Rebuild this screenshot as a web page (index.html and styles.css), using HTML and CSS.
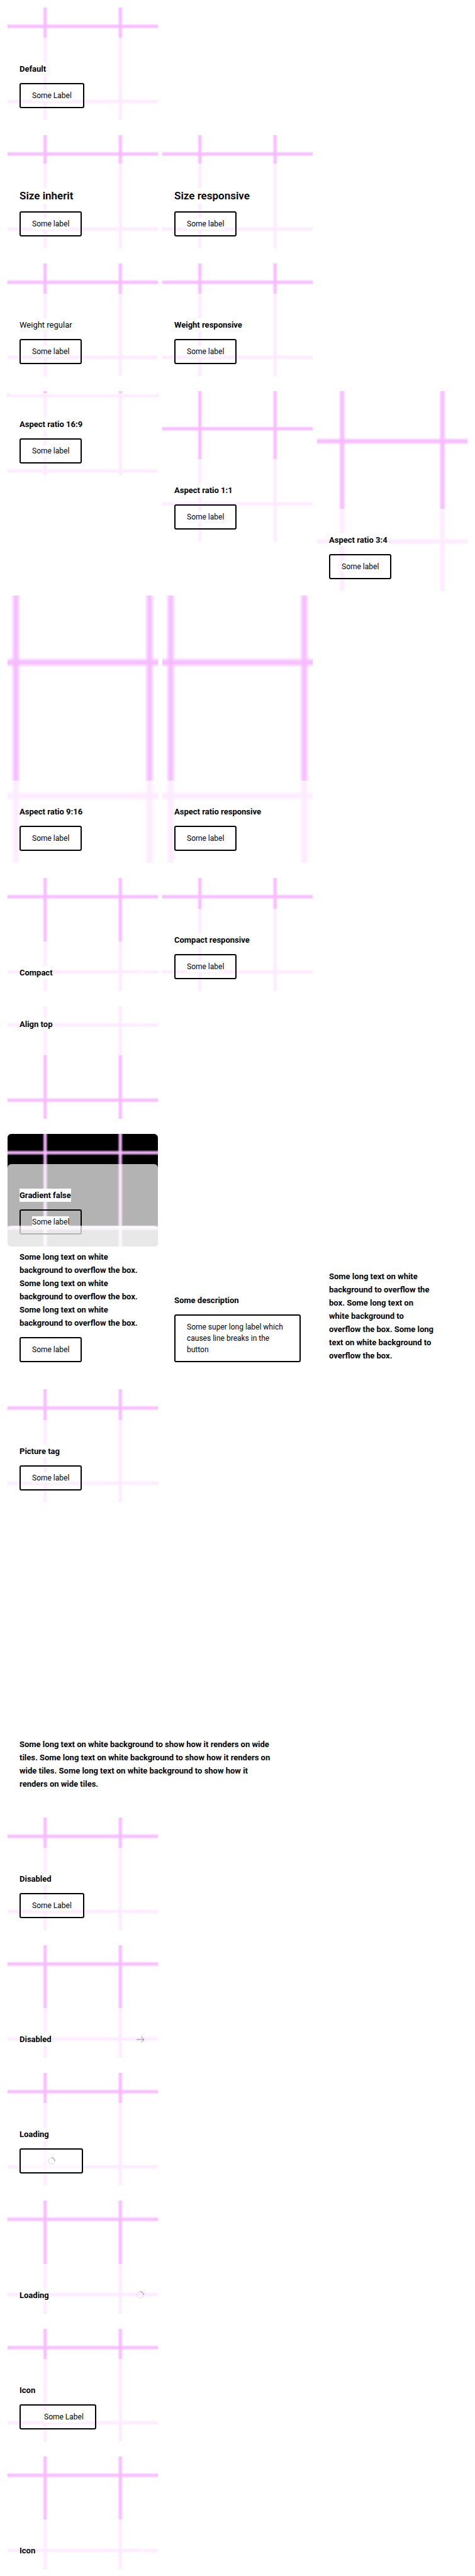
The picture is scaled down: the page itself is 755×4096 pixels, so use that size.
FILE: index.html
```html
<!DOCTYPE html>
<html lang="en">
<head>
<meta charset="utf-8">
<meta name="viewport" content="width=device-width, initial-scale=1">
<title>Tiles</title>
<link rel="stylesheet" href="styles.css">
</head>
<body>
<svg class="defs" aria-hidden="true">
  <defs>
    <linearGradient id="fade-x">
      <stop offset="0" stop-color="#f6baff" stop-opacity="0"/>
      <stop offset=".4" stop-color="#f6baff" stop-opacity=".92"/>
      <stop offset=".6" stop-color="#f6baff" stop-opacity=".92"/>
      <stop offset="1" stop-color="#f6baff" stop-opacity="0"/>
    </linearGradient>
    <linearGradient id="fade-y" x2="0" y2="1">
      <stop offset="0" stop-color="#f6baff" stop-opacity="0"/>
      <stop offset=".4" stop-color="#f6baff" stop-opacity=".92"/>
      <stop offset=".6" stop-color="#f6baff" stop-opacity=".92"/>
      <stop offset="1" stop-color="#f6baff" stop-opacity="0"/>
    </linearGradient>
    <symbol id="lines" viewBox="0 0 316 316">
      <rect x="73" y="0" width="12" height="316" fill="url(#fade-x)"/>
      <rect x="231" y="0" width="12" height="316" fill="url(#fade-x)"/>
      <rect x="0" y="73" width="316" height="12" fill="url(#fade-y)"/>
      <rect x="0" y="231" width="316" height="12" fill="url(#fade-y)"/>
    </symbol>
    <symbol id="arrow" viewBox="0 0 24 24">
      <path d="M4 12h15.5M14 6l6 6-6 6" fill="none" stroke="currentColor" stroke-width="1.2"/>
    </symbol>
    <symbol id="trash" viewBox="0 0 24 24">
      <path d="M6.500 7v13.500h11V7M4.500 6.500h15M9.500 6.500V4h5v2.500M10 9.500v8M14 9.500v8" fill="none" stroke="currentColor" stroke-width="1.2"/>
    </symbol>
    <symbol id="spinner" viewBox="0 0 24 24">
      <circle cx="12" cy="12" r="6.800" fill="none" stroke="#d8d8db" stroke-width="1.300"/>
      <path d="M12 5.200a6.800 6.800 0 0 1 6.800 6.800" fill="none" stroke="#7c7f84" stroke-width="1.300"/>
    </symbol>
  </defs>
</svg>

<main class="page">
  <section class="grid">
    <article class="tile">
      <svg class="media" viewBox="0 0 316 316" preserveAspectRatio="xMidYMid slice"><use href="#lines"/></svg>
      <div class="content"><p class="title">Default</p><a class="btn" href="#"><span class="label">Some Label</span></a></div>
    </article>
  </section>

  <section class="grid">
    <article class="tile">
      <svg class="media" viewBox="0 0 316 316" preserveAspectRatio="xMidYMid slice"><use href="#lines"/></svg>
      <div class="content"><p class="title title-large">Size inherit</p><a class="btn" href="#"><span class="label">Some label</span></a></div>
    </article>
    <article class="tile">
      <svg class="media" viewBox="0 0 316 316" preserveAspectRatio="xMidYMid slice"><use href="#lines"/></svg>
      <div class="content"><p class="title title-large">Size responsive</p><a class="btn" href="#"><span class="label">Some label</span></a></div>
    </article>
  </section>

  <section class="grid">
    <article class="tile">
      <svg class="media" viewBox="0 0 316 316" preserveAspectRatio="xMidYMid slice"><use href="#lines"/></svg>
      <div class="content"><p class="title title-regular">Weight regular</p><a class="btn" href="#"><span class="label">Some label</span></a></div>
    </article>
    <article class="tile">
      <svg class="media" viewBox="0 0 316 316" preserveAspectRatio="xMidYMid slice"><use href="#lines"/></svg>
      <div class="content"><p class="title">Weight responsive</p><a class="btn" href="#"><span class="label">Some label</span></a></div>
    </article>
  </section>

  <section class="grid">
    <article class="tile ratio-16-9">
      <svg class="media" viewBox="0 0 316 316" preserveAspectRatio="xMidYMid slice"><use href="#lines"/></svg>
      <div class="content"><p class="title">Aspect ratio 16:9</p><a class="btn" href="#"><span class="label">Some label</span></a></div>
    </article>
    <article class="tile ratio-1-1">
      <svg class="media" viewBox="0 0 316 316" preserveAspectRatio="xMidYMid slice"><use href="#lines"/></svg>
      <div class="content"><p class="title">Aspect ratio 1:1</p><a class="btn" href="#"><span class="label">Some label</span></a></div>
    </article>
    <article class="tile ratio-3-4">
      <svg class="media" viewBox="0 0 316 316" preserveAspectRatio="xMidYMid slice"><use href="#lines"/></svg>
      <div class="content"><p class="title">Aspect ratio 3:4</p><a class="btn" href="#"><span class="label">Some label</span></a></div>
    </article>
    <article class="tile ratio-9-16">
      <svg class="media" viewBox="0 0 316 316" preserveAspectRatio="xMidYMid slice"><use href="#lines"/></svg>
      <div class="content"><p class="title">Aspect ratio 9:16</p><a class="btn" href="#"><span class="label">Some label</span></a></div>
    </article>
    <article class="tile ratio-9-16">
      <svg class="media" viewBox="0 0 316 316" preserveAspectRatio="xMidYMid slice"><use href="#lines"/></svg>
      <div class="content"><p class="title">Aspect ratio responsive</p><a class="btn" href="#"><span class="label">Some label</span></a></div>
    </article>
  </section>

  <section class="grid">
    <article class="tile">
      <svg class="media" viewBox="0 0 316 316" preserveAspectRatio="xMidYMid slice"><use href="#lines"/></svg>
      <div class="content compact"><p class="title">Compact</p><a class="icon-link" href="#" aria-label="Some label"><svg class="icon"><use href="#arrow"/></svg></a></div>
    </article>
    <article class="tile">
      <svg class="media" viewBox="0 0 316 316" preserveAspectRatio="xMidYMid slice"><use href="#lines"/></svg>
      <div class="content"><p class="title">Compact responsive</p><a class="btn" href="#"><span class="label">Some label</span></a></div>
    </article>
  </section>

  <section class="grid">
    <article class="tile">
      <svg class="media" viewBox="0 0 316 316" preserveAspectRatio="xMidYMid slice"><use href="#lines"/></svg>
      <div class="content compact align-top"><p class="title">Align top</p><a class="icon-link" href="#" aria-label="Some label"><svg class="icon"><use href="#arrow"/></svg></a></div>
    </article>
  </section>

  <section class="grid">
    <article class="tile">
      <svg class="media media-dark" viewBox="0 0 316 316" preserveAspectRatio="xMidYMid slice"><use href="#lines"/></svg>
      <div class="content"><p class="title">Gradient false</p><a class="btn" href="#"><span class="label">Some label</span></a></div>
    </article>
  </section>

  <section class="grid">
    <article class="tile">
      <div class="content"><p class="title">Some long text on white background to overflow the box. Some long text on white background to overflow the box. Some long text on white background to overflow the box.</p><a class="btn" href="#"><span class="label">Some label</span></a></div>
    </article>
    <article class="tile">
      <div class="content"><p class="title">Some description</p><a class="btn" href="#"><span class="label">Some super long label which causes line breaks in the button</span></a></div>
    </article>
    <article class="tile">
      <div class="content compact"><p class="title">Some long text on white background to overflow the box. Some long text on white background to overflow the box. Some long text on white background to overflow the box.</p><a class="icon-link" href="#" aria-label="Some label"><svg class="icon"><use href="#arrow"/></svg></a></div>
    </article>
  </section>

  <section class="grid">
    <article class="tile">
      <svg class="media" viewBox="0 0 316 316" preserveAspectRatio="xMidYMid slice"><use href="#lines"/></svg>
      <div class="content"><p class="title">Picture tag</p><a class="btn" href="#"><span class="label">Some label</span></a></div>
    </article>
  </section>

  <section>
    <article class="tile tile-wide">
      <div class="content compact"><p class="title">Some long text on white background to show how it renders on wide tiles. Some long text on white background to show how it renders on wide tiles. Some long text on white background to show how it renders on wide tiles.</p><a class="icon-link" href="#" aria-label="Some label"><svg class="icon"><use href="#arrow"/></svg></a></div>
    </article>
  </section>

  <section class="grid">
    <article class="tile">
      <svg class="media" viewBox="0 0 316 316" preserveAspectRatio="xMidYMid slice"><use href="#lines"/></svg>
      <div class="content"><p class="title">Disabled</p><button class="btn" type="button" disabled><span class="label">Some Label</span></button></div>
    </article>
  </section>

  <section class="grid">
    <article class="tile">
      <svg class="media" viewBox="0 0 316 316" preserveAspectRatio="xMidYMid slice"><use href="#lines"/></svg>
      <div class="content compact"><p class="title">Disabled</p><button class="icon-link" type="button" disabled aria-label="Some Label"><svg class="icon"><use href="#arrow"/></svg></button></div>
    </article>
  </section>

  <section class="grid">
    <article class="tile">
      <svg class="media" viewBox="0 0 316 316" preserveAspectRatio="xMidYMid slice"><use href="#lines"/></svg>
      <div class="content"><p class="title">Loading</p><button class="btn btn-loading" type="button" aria-label="Some Label" aria-busy="true"><svg class="icon"><use href="#spinner"/></svg></button></div>
    </article>
  </section>

  <section class="grid">
    <article class="tile">
      <svg class="media" viewBox="0 0 316 316" preserveAspectRatio="xMidYMid slice"><use href="#lines"/></svg>
      <div class="content compact"><p class="title">Loading</p><button class="icon-link" type="button" aria-label="Some Label" aria-busy="true"><svg class="icon"><use href="#spinner"/></svg></button></div>
    </article>
  </section>

  <section class="grid">
    <article class="tile">
      <svg class="media" viewBox="0 0 316 316" preserveAspectRatio="xMidYMid slice"><use href="#lines"/></svg>
      <div class="content"><p class="title">Icon</p><button class="btn btn-icon" type="button"><svg class="icon"><use href="#trash"/></svg><span class="label">Some Label</span></button></div>
    </article>
  </section>

  <section class="grid">
    <article class="tile">
      <svg class="media" viewBox="0 0 316 316" preserveAspectRatio="xMidYMid slice"><use href="#lines"/></svg>
      <div class="content compact"><p class="title">Icon</p><button class="icon-link" type="button" aria-label="Some Label"><svg class="icon"><use href="#trash"/></svg></button></div>
    </article>
  </section>
</main>
</body>
</html>
```

FILE: styles.css
```css
*,
*::before,
*::after {
  box-sizing: border-box;
}

body {
  margin: 0;
  background: #fff;
  color: #010205;
  font-family: Roboto, "Liberation Sans", sans-serif;
}

.defs {
  position: absolute;
  width: 0;
  height: 0;
}

.page {
  display: flex;
  flex-direction: column;
  gap: 24px;
  padding: 12px 12px 10px;
}

.grid {
  display: grid;
  grid-template-columns: repeat(3, minmax(0, 1fr));
  align-items: start;
  gap: 7px;
}

.tile {
  position: relative;
  aspect-ratio: 4 / 3;
}

.ratio-16-9 { aspect-ratio: 16 / 9; }
.ratio-1-1 { aspect-ratio: 1; }
.ratio-3-4 { aspect-ratio: 3 / 4; }
.ratio-9-16 { aspect-ratio: 9 / 16; }

.tile-wide {
  max-width: 604px;
}

.media {
  display: block;
  width: 100%;
  height: 100%;
  border-radius: 6px;
}

.media-dark {
  background: #000;
}

/* Translucent text panel laid over the picture */
.content {
  position: absolute;
  right: 0;
  bottom: 0;
  left: 0;
  display: flex;
  flex-direction: column;
  align-items: flex-start;
  gap: 12px;
  padding: 39px 19px 19px;
  border-radius: 6px;
  background: rgba(255, 255, 255, .7);
}

.compact {
  flex-direction: row;
  align-items: center;
  justify-content: space-between;
  gap: 16px;
}

.align-top {
  top: 0;
  bottom: auto;
  padding: 18px 19px 39px;
}

.title {
  max-width: 404px;
  margin: 0;
  background: #fff;
  font-size: 13px;
  font-weight: 700;
  line-height: 21px;
}

.title-large {
  font-size: 17px;
  font-weight: 600;
  line-height: 25px;
}

.title-regular {
  font-weight: 400;
}

.btn {
  display: inline-flex;
  align-items: center;
  justify-content: center;
  gap: 6px;
  min-height: 40px;
  padding: 9px 18px;
  border: 2px solid #010205;
  border-radius: 3px;
  background: none;
  color: #010205;
  font: 400 12px/18px Roboto, "Liberation Sans", sans-serif;
  text-align: left;
  text-decoration: none;
}

.label {
  background: #fff;
}

.btn-icon {
  padding-left: 13px;
}

.btn-icon .icon {
  color: #fff;
}

.btn-loading {
  min-width: 101px;
  background: rgba(255, 255, 255, .5);
}

.icon-link {
  display: block;
  flex: none;
  padding: 0;
  border: 0;
  background: none;
  color: #fff;
}

.icon-link:disabled {
  color: #7c7f84;
}

.icon {
  display: block;
  width: 18px;
  height: 18px;
}
```
